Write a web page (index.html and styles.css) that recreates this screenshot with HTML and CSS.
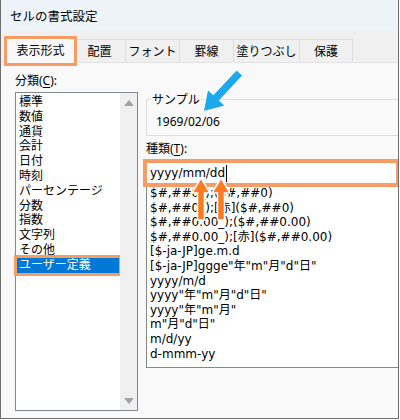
FILE: index.html
```html
<!DOCTYPE html>
<html lang="ja">
<head>
<meta charset="utf-8">
<link rel="stylesheet" href="styles.css">
</head>
<body>
<div class="window">
  <div class="titlebar">セルの書式設定</div>
  <div class="tabs">
    <div class="tab active">表示形式</div>
    <div class="tab t1">配置</div>
    <div class="tab t2">フォント</div>
    <div class="tab t3">罫線</div>
    <div class="tab t4">塗りつぶし</div>
    <div class="tab t5">保護</div>
  </div>
  <div class="content">
    <div class="left">
      <div class="label">分類(<u>C</u>):</div>
      <div class="catlist">
        <ul class="items">
          <li>標準</li>
          <li>数値</li>
          <li>通貨</li>
          <li>会計</li>
          <li>日付</li>
          <li>時刻</li>
          <li>パーセンテージ</li>
          <li>分数</li>
          <li>指数</li>
          <li>文字列</li>
          <li>その他</li>
          <li class="selected">ユーザー定義</li>
        </ul>
        <div class="scroll">
          <span class="arrow-up"></span>
          <span class="arrow-down"></span>
        </div>
      </div>
    </div>
    <div class="right">
      <div class="sample">
        <span class="legend">サンプル</span>
        <div class="sample-val">1969/02/06</div>
      </div>
      <div class="label label-type">種類(<u>T</u>):</div>
      <div class="input">yyyy/mm/dd<span class="caret"></span></div>
      <ul class="fmtlist">
        <li>$#,##0_);($#,##0)</li>
        <li>$#,##0_);[赤]($#,##0)</li>
        <li>$#,##0.00_);($#,##0.00)</li>
        <li>$#,##0.00_);[赤]($#,##0.00)</li>
        <li>[$-ja-JP]ge.m.d</li>
        <li>[$-ja-JP]ggge"年"m"月"d"日"</li>
        <li>yyyy/m/d</li>
        <li>yyyy"年"m"月"d"日"</li>
        <li>yyyy"年"m"月"</li>
        <li>m"月"d"日"</li>
        <li>m/d/yy</li>
        <li>d-mmm-yy</li>
      </ul>
    </div>
  </div>
  <svg class="overlay" width="400" height="420" viewBox="0 0 400 420">
    <g transform="translate(203 112) rotate(43)">
      <polygon points="0,0 -12.5,-20 -4.5,-20 -4.5,-54 4.5,-54 4.5,-20 12.5,-20" fill="#1ba8ec" stroke="#ffffff" stroke-width="1.5" stroke-linejoin="miter"/>
    </g>
    <polygon points="201,178 210,193 204.5,193 204.5,220 197.5,220 197.5,193 192,193" fill="#fb7a22" stroke="#ffffff" stroke-width="1.5"/>
    <polygon points="221,178 230,193 224.5,193 224.5,220 217.5,220 217.5,193 212,193" fill="#fb7a22" stroke="#ffffff" stroke-width="1.5"/>
  </svg>
</div>
</body>
</html>
```

FILE: styles.css
```css
* { box-sizing: border-box; }
html, body { margin: 0; padding: 0; background: #ffffff; }
body {
  font-family: "Noto Sans", "Noto Sans CJK JP", sans-serif;
  font-size: 12px;
  color: #000;
}
.window {
  position: relative;
  width: 399px;
  height: 419px;
  border: 1px solid #6f6f6f;
  border-top: none;
  overflow: hidden;
  background: #f9f9f9;
  display: flex;
  flex-direction: column;
}
.titlebar {
  height: 31px;
  flex: none;
  background: #eef3f9;
  padding-left: 9px;
  display: flex;
  align-items: center;
  font-size: 12.5px;
}
.tabs {
  height: 32px;
  flex: none;
  background: #f0f0f0;
  border-bottom: 1px solid #e3e3e3;
  display: flex;
  align-items: flex-end;
  padding-left: 6px;
}
.tab {
  height: 23px;
  display: flex;
  align-items: center;
  justify-content: center;
  border-top: 1px solid #dedede;
  border-right: 1px solid #dedede;
  line-height: 15px;
}
.tab.active {
  width: 67px;
  height: 24px;
  margin-bottom: -1px;
  background: #f9f9f9;
  border: none;
  outline: 3.5px solid #f69c64;
  position: relative;
  z-index: 1;
  padding-bottom: 2px;
}
.t1 { width: 52px; }
.t2 { width: 54px; }
.t3 { width: 54px; }
.t4 { width: 66px; }
.t5 { width: 53px; }
.content {
  flex: 1;
  display: flex;
  gap: 8px;
  padding: 10px 0 0 14px;
}
.label {
  line-height: 15px;
  height: 15px;
}
.label u { text-underline-offset: 2px; }
.left {
  width: 123px;
  flex: none;
  display: flex;
  flex-direction: column;
  gap: 4px;
}
.catlist {
  height: 319px;
  border: 1px solid #828790;
  background: #ffffff;
  display: flex;
}
.items {
  list-style: none;
  margin: 0;
  padding: 2px 1px 0 1px;
  flex: 1;
}
.items li {
  line-height: 14.8px;
  height: 14.8px;
  padding-left: 2px;
  white-space: nowrap;
}
.items li.selected {
  background: #0078d7;
  color: #ffffff;
  outline: 3px solid #f69c64;
}
.scroll {
  width: 17px;
  flex: none;
  background: #f0f0f0;
  display: flex;
  flex-direction: column;
  justify-content: space-between;
  align-items: center;
  padding: 7px 0 6px;
}
.arrow-up, .arrow-down {
  width: 0;
  height: 0;
  border-left: 5px solid transparent;
  border-right: 5px solid transparent;
}
.arrow-up { border-bottom: 6px solid #a3a3a3; }
.arrow-down { border-top: 6px solid #a3a3a3; }
.right {
  width: 262px;
  flex: none;
  display: flex;
  flex-direction: column;
}
.sample {
  margin-top: 26px;
  height: 37px;
  border: 1px solid #dcdcdc;
  display: flex;
  flex-direction: column;
  align-items: flex-start;
}
.legend {
  margin-top: -8px;
  margin-left: 4px;
  padding: 0 1px;
  line-height: 15px;
  background: #f9f9f9;
}
.sample-val {
  margin-top: 7px;
  margin-left: 9px;
  line-height: 15px;
}
.label-type { margin-top: 5px; }
.input {
  margin-top: 7px;
  margin-left: 1px;
  width: 249px;
  height: 20px;
  background: #ffffff;
  outline: 4px solid #f69c64;
  padding-left: 3px;
  line-height: 19px;
  display: flex;
  align-items: center;
  position: relative;
  z-index: 1;
  font-family: "DejaVu Sans", "Noto Sans CJK JP", sans-serif;
}
.caret {
  display: inline-block;
  width: 1px;
  height: 17px;
  background: #000;
  margin-left: 1px;
}
.fmtlist {
  list-style: none;
  margin: 0;
  height: 185px;
  border: 1px solid #828790;
  background: #ffffff;
  padding: 2px 0 0 3px;
  font-family: "DejaVu Sans", "Noto Sans CJK JP", sans-serif;
}
.fmtlist li {
  line-height: 14.6px;
  height: 14.6px;
  white-space: nowrap;
}
.overlay {
  position: absolute;
  left: -1px;
  top: 0;
  z-index: 5;
  pointer-events: none;
}
```
